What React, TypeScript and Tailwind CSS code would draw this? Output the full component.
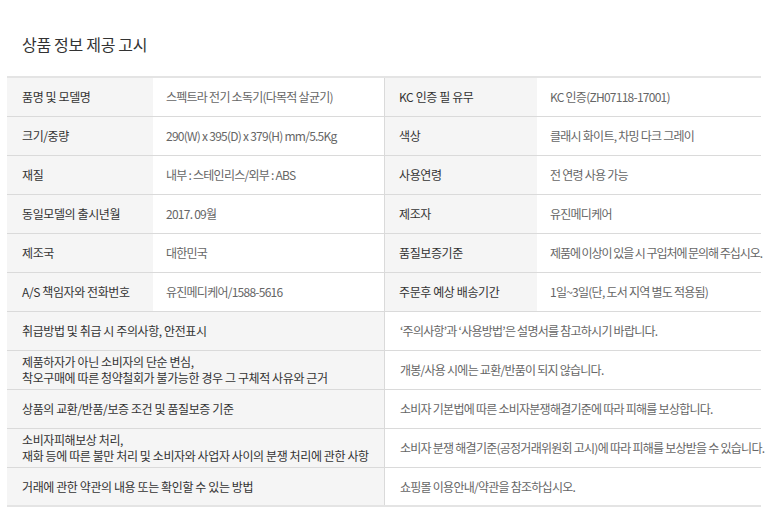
const specRows = [
  ['품명 및 모델명', '스펙트라 전기 소독기(다목적 살균기)', 'KC 인증 필 유무', 'KC 인증(ZH07118-17001)'],
  ['크기/중량', '290(W) x 395(D) x 379(H) mm/5.5Kg', '색상', '클래시 화이트, 차밍 다크 그레이'],
  ['재질', '내부 : 스테인리스/외부 : ABS', '사용연령', '전 연령 사용 가능'],
  ['동일모델의 출시년월', '2017. 09월', '제조자', '유진메디케어'],
  ['제조국', '대한민국', '품질보증기준', '제품에 이상이 있을 시 구입처에 문의해 주십시오.'],
  ['A/S 책임자와 전화번호', '유진메디케어/1588-5616', '주문후 예상 배송기간', '1일~3일(단, 도서 지역 별도 적용됨)'],
];

const noticeRows = [
  [['취급방법 및 취급 시 주의사항, 안전표시'], '‘주의사항’과 ‘사용방법’은 설명서를 참고하시기 바랍니다.'],
  [['제품하자가 아닌 소비자의 단순 변심,', '착오구매에 따른 청약철회가 불가능한 경우 그 구체적 사유와 근거'], '개봉/사용 시에는 교환/반품이 되지 않습니다.'],
  [['상품의 교환/반품/보증 조건 및 품질보증 기준'], '소비자 기본법에 따른 소비자분쟁해결기준에 따라 피해를 보상합니다.'],
  [['소비자피해보상 처리,', '재화 등에 따른 불만 처리 및 소비자와 사업자 사이의 분쟁 처리에 관한 사항'], '소비자 분쟁 해결기준(공정거래위원회 고시)에 따라 피해를 보상받을 수 있습니다.'],
  [['거래에 관한 약관의 내용 또는 확인할 수 있는 방법'], '쇼핑몰 이용안내/약관을 참조하십시오.'],
] as const;

export default function App() {
  return (
    <div
      className="w-[768px] h-[531px] bg-white overflow-hidden"
      style={{ fontFamily: '"Noto Sans CJK KR", "Noto Sans", sans-serif' }}
    >
      {/* 제목 */}
      <h2 className="pl-[22px] pt-[34px] h-[76px] text-[16px] leading-[20px] text-[#333] tracking-[-0.3px]">
        상품 정보 제공 고시
      </h2>

      <div className="ml-[7px] w-[754px] border-t-2 border-[#e4e4e4] text-[12px] tracking-[-0.4px]">
        {specRows.map((row, i) => (
          <div
            key={i}
            className="grid grid-cols-[146px_231px_153px_224px] h-[39px] border-b border-[#dadada]"
          >
            <div className="bg-[#f5f5f5] pl-[15px] flex items-center text-[#333]">{row[0]}</div>
            <div className="pl-[13px] flex items-center text-[#666] whitespace-nowrap tracking-[-0.75px]">
              {row[1]}
            </div>
            <div className="bg-[#f5f5f5] border-l border-[#dadada] pl-[14px] flex items-center text-[#333]">
              {row[2]}
            </div>
            {/* 긴 문구는 자간을 조금 더 좁힘 */}
            <div
              className={`pl-[13px] flex items-center text-[#666] whitespace-nowrap ${
                row[3].length > 24 ? 'tracking-[-1.05px]' : 'tracking-[-0.75px]'
              }`}
            >
              {row[3]}
            </div>
          </div>
        ))}

        {noticeRows.map(([label, value], i) => (
          <div
            key={i}
            className={`grid grid-cols-2 h-[39px] border-b ${
              i === noticeRows.length - 1 ? 'border-b-2 border-[#e4e4e4]' : 'border-[#dadada]'
            }`}
          >
            <div className="bg-[#f5f5f5] pl-[15px] flex flex-col justify-center text-[#333] leading-[16px] whitespace-nowrap">
              {label.map((line, j) => (
                <span key={j}>{line}</span>
              ))}
            </div>
            <div className="border-l border-[#dadada] pl-[15px] flex items-center text-[#666] whitespace-nowrap tracking-[-0.75px]">
              {value}
            </div>
          </div>
        ))}
      </div>
    </div>
  );
}
